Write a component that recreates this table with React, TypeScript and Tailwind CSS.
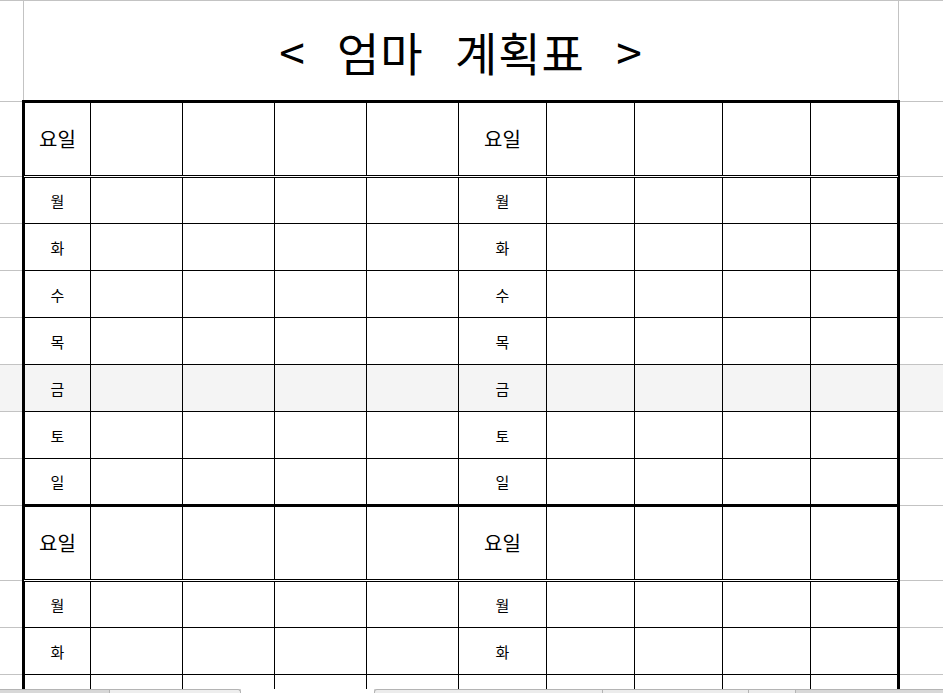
import React from 'react';

type Edge = 'thin' | 'double' | 'thick';

// column widths incl. the 1px right line (last one has none)
const COLS = ['w-[66px]', 'w-[92px]', 'w-[92px]', 'w-[92px]', 'w-[92px]', 'w-[88px]', 'w-[88px]', 'w-[88px]', 'w-[88px]', 'w-[86px]'];

const EDGE: Record<Edge, string> = {
  thin: 'border-b',
  double: 'border-b-[3px] [border-bottom-style:double]',
  thick: 'border-b-[3px]',
};

const ROW_H: Record<string, string> = {
  head1: 'h-[78px]',
  head2: 'h-[75px]',
  day46: 'h-[46px]',
  day47: 'h-[47px]',
  day48: 'h-[48px]',
};

function SheetRow({
  label,
  size,
  edge,
  header = false,
  first = false,
  shade = false,
}: {
  label: string;
  size: string;
  edge: Edge;
  header?: boolean;
  first?: boolean;
  shade?: boolean;
}) {
  const gap = edge === 'thin' ? '' : 'mb-px';
  const marginCls = `border-b border-[#c3c3c3] ${gap} ${first ? 'mt-px border-t' : ''}`;
  const textCls = header ? 'text-[20px]' : 'text-[15px]';

  return (
    <div className={`flex shrink-0 ${ROW_H[size]} ${shade ? 'bg-[#f4f4f4]' : ''}`}>
      <div className={`w-[22px] shrink-0 ${marginCls}`} />
      <div
        className={`flex w-[878px] shrink-0 border-x-[3px] border-black ${EDGE[edge]} ${first ? 'border-t-[3px]' : ''}`}
      >
        {COLS.map((w, i) => (
          <div
            key={i}
            className={`${w} flex shrink-0 items-center justify-center ${i < COLS.length - 1 ? 'border-r border-black' : ''}`}
          >
            {label && (i === 0 || i === 5) && <span className={`${textCls} leading-none text-black`}>{label}</span>}
          </div>
        ))}
      </div>
      <div className={`flex-1 ${marginCls}`} />
    </div>
  );
}

const DAYS = ['월', '화', '수', '목', '금', '토', '일'];

// days: which rows of the week are visible in the window (the rest is scrolled away)
function Block({ top, days }: { top: boolean; days: string[] }) {
  return (
    <>
      <SheetRow label="요일" size={top ? 'head1' : 'head2'} edge="double" header first={top} />
      {days.map((d, i) => {
        const last = d === '일';
        const size = i === 0 ? 'day46' : last ? 'day48' : 'day47';
        return (
          <SheetRow key={d + i} label={d} size={size} edge={last ? 'thick' : 'thin'} shade={d === '금'} />
        );
      })}
    </>
  );
}

export default function App() {
  return (
    <div
      className="flex h-[693px] w-[943px] flex-col overflow-hidden bg-white"
      style={{ fontFamily: '"Noto Sans CJK KR", "Noto Sans", sans-serif' }}
    >
      <div className="flex flex-1 flex-col overflow-hidden">
        {/* title row (merged cells) */}
        <div className="flex h-[100px] shrink-0 border-t border-[#c3c3c3]">
          <div className="w-[24px] shrink-0 border-r border-[#c3c3c3]" />
          <div className="flex w-[875px] shrink-0 items-center justify-center border-r border-[#c3c3c3]">
            <h1 className="text-[46px] leading-none font-normal tracking-[1px] [word-spacing:20px] text-black">
              &lt; 엄마 계획표 &gt;
            </h1>
          </div>
          <div className="flex-1" />
        </div>

        <Block top days={DAYS} />
        <Block top={false} days={['월', '화', '']} />
      </div>

      {/* sheet tabs strip */}
      <div className="flex h-[4px] shrink-0 bg-[#d8d8d8]">
        <div className="w-[109px] border-t border-[#b4b4b4] bg-[#d8d8d8]" />
        <div className="w-[132px] rounded-tr-[3px] border-x border-t border-[#b4b4b4] bg-[#eeeeee]" />
        <div className="w-[133px] bg-white" />
        <div className="w-[229px] rounded-tl-[3px] border-x border-t border-[#b4b4b4] bg-[#ececec]" />
        <div className="w-[146px] border-r border-t border-[#b4b4b4] bg-[#ececec]" />
        <div className="w-[47px] border-r border-t border-[#b4b4b4] bg-[#ececec]" />
        <div className="flex-1 border-t border-[#b4b4b4] bg-[#d8d8d8]" />
      </div>
    </div>
  );
}
